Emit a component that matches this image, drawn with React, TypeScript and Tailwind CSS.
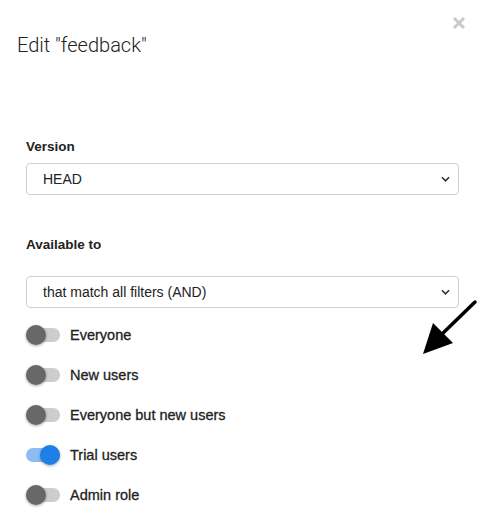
import { useState } from "react";

const filters = [
  { id: "everyone", label: "Everyone", on: false },
  { id: "new", label: "New users", on: false },
  { id: "not-new", label: "Everyone but new users", on: false },
  { id: "trial", label: "Trial users", on: true },
  { id: "admin", label: "Admin role", on: false },
];

function Chevron() {
  return (
    <svg
      viewBox="0 0 10 6"
      className="pointer-events-none absolute right-[9px] top-1/2 h-[6px] w-[9px] -translate-y-1/2"
    >
      <path d="M1 1l4 4 4-4" fill="none" stroke="#333" strokeWidth="1.8" />
    </svg>
  );
}

function Select({ value }: { value: string }) {
  return (
    <div className="relative">
      <select
        defaultValue={value}
        className="h-[32px] w-full appearance-none rounded-[4px] border border-[#cfcfcf] bg-white pl-[16px] text-[14px] text-[#222] outline-none"
      >
        <option>{value}</option>
      </select>
      <Chevron />
    </div>
  );
}

function Toggle({ on, onClick }: { on: boolean; onClick: () => void }) {
  return (
    <button
      type="button"
      onClick={onClick}
      className={`relative h-[14px] w-[34px] rounded-full ${on ? "bg-[#8dbcf2]" : "bg-[#cdcdcd]"}`}
    >
      <span
        className={`absolute top-1/2 size-[20px] -translate-y-1/2 rounded-full shadow-[0_1px_3px_rgba(0,0,0,0.35)] ${
          on ? "left-[14px] bg-[#1e7fe6]" : "left-[0px] bg-[#686868]"
        }`}
      />
    </button>
  );
}

export default function App() {
  const [state, setState] = useState(filters);

  return (
    <div className="relative min-h-[529px] w-[494px] bg-white font-['Liberation_Sans',Arial,sans-serif] text-[#333]">
      <button
        type="button"
        className="absolute right-[28px] top-[16px] size-[14px]"
        aria-label="Close"
      >
        <svg viewBox="0 0 14 14" className="size-[14px]">
          <path d="M2 2l10 10M12 2L2 12" stroke="#c9c9c9" strokeWidth="3" />
        </svg>
      </button>

      <h1 className="px-[17px] pt-[32px] font-['Roboto',sans-serif] text-[20px] font-light leading-[26px] text-[#222]">
        Edit "feedback"
      </h1>

      <div className="pl-[26px] pr-[35px] pt-[81px]">
        <label className="block text-[13.5px] font-bold leading-[16px] text-[#222]">
          Version
        </label>
        <div className="mt-[8px]">
          <Select value="HEAD" />
        </div>

        <label className="mt-[42px] block text-[13.5px] font-bold leading-[16px] text-[#222]">
          Available to
        </label>
        <div className="mt-[23px]">
          <Select value="that match all filters (AND)" />
        </div>

        <div className="mt-[7px] flex flex-col">
          {state.map((f, i) => (
            <div key={f.id} className="flex h-[40px] items-center gap-[10px]">
              <Toggle
                on={f.on}
                onClick={() =>
                  setState((s) =>
                    s.map((x, j) => (j === i ? { ...x, on: !x.on } : x))
                  )
                }
              />
              <span className="text-[14.5px] leading-[16px] text-[#222] [-webkit-text-stroke:0.3px_#222]">
                {f.label}
              </span>
            </div>
          ))}
        </div>
      </div>

      <svg
        viewBox="0 0 494 529"
        className="pointer-events-none absolute left-0 top-0 h-[529px] w-[494px]"
      >
        <path d="M475 302L440 336" stroke="#000" strokeWidth="3.5" strokeLinecap="round" />
        <polygon points="423,354 433,323 453,343" fill="#000" />
      </svg>
    </div>
  );
}
